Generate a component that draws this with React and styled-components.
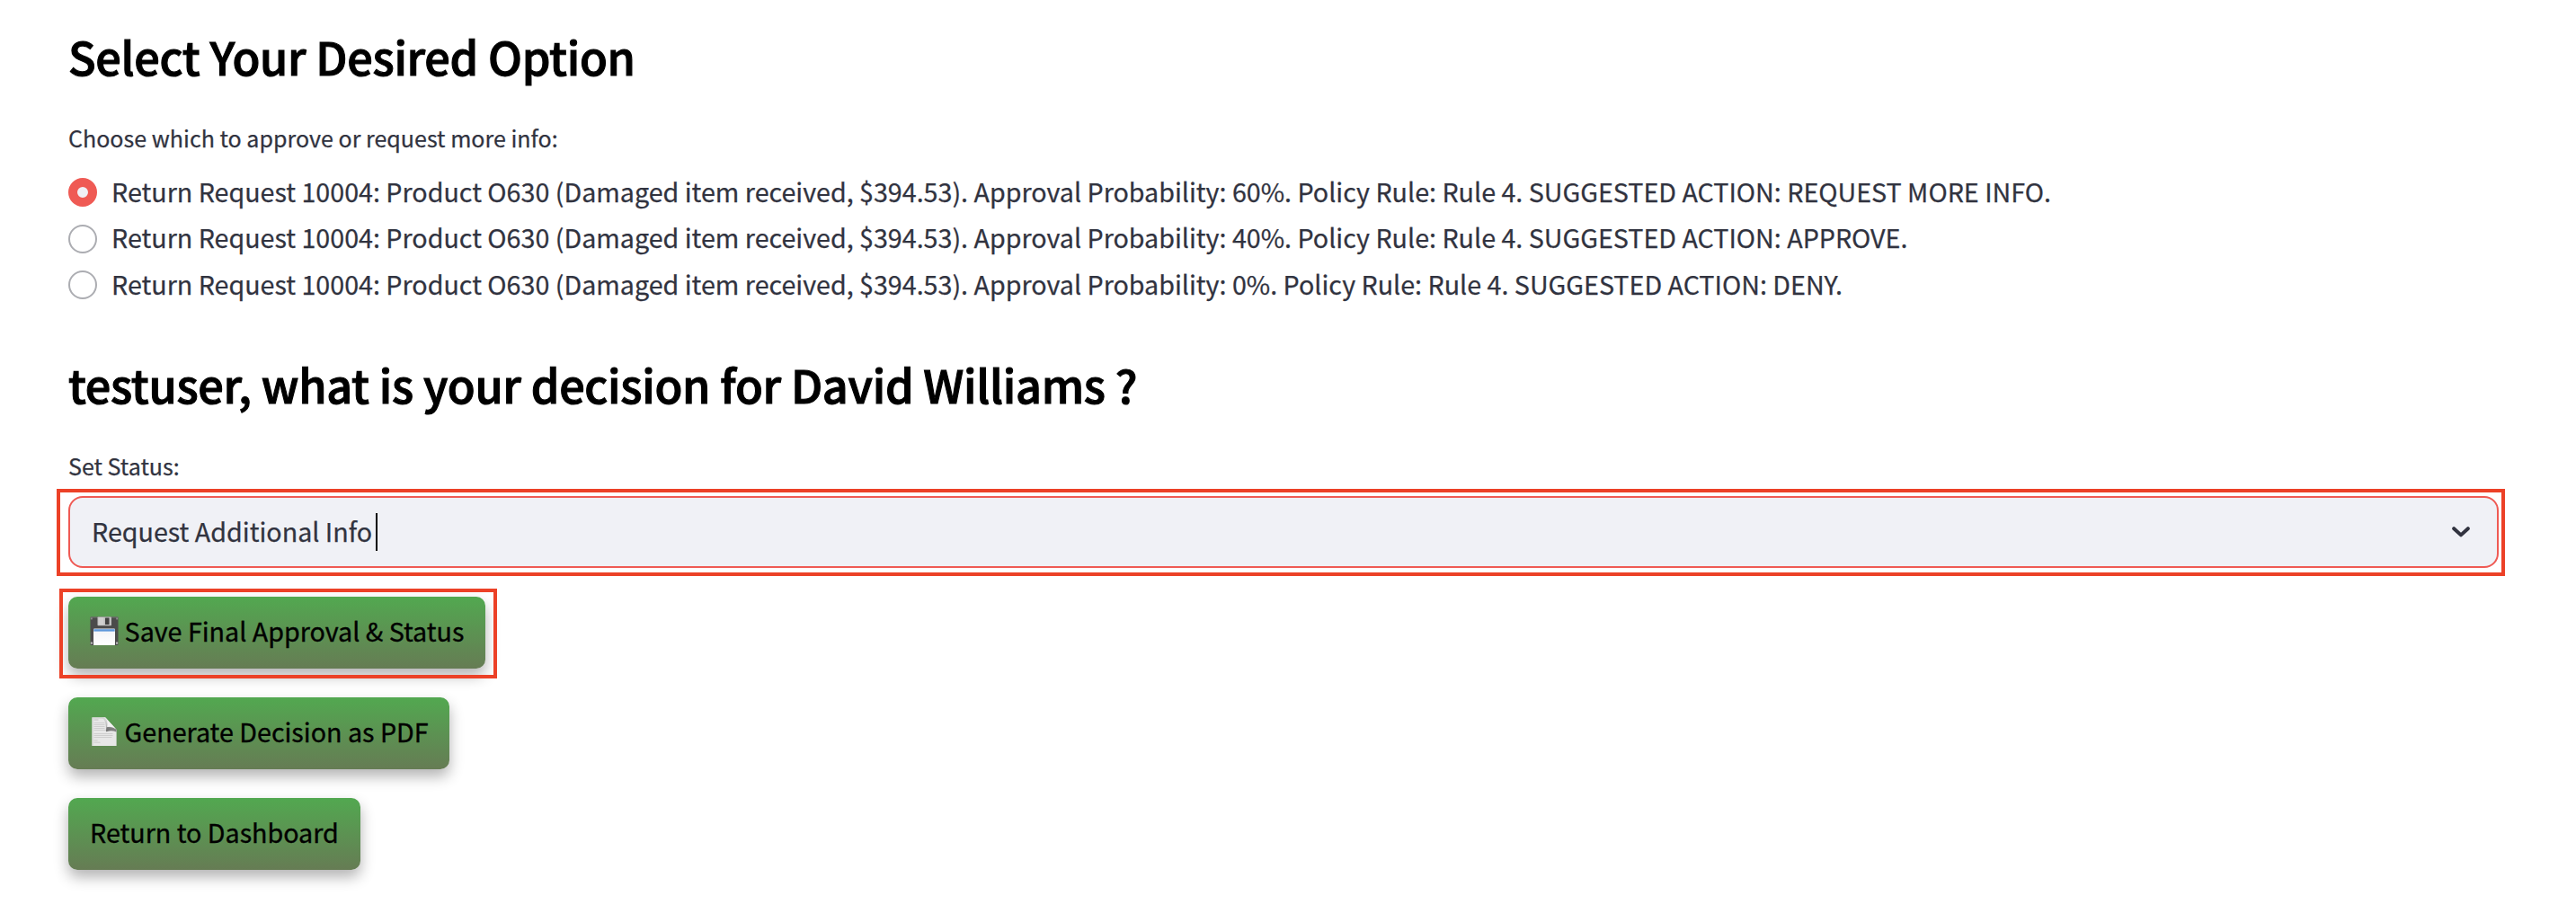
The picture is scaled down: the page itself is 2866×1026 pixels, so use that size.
import React from "react";
import styled, { createGlobalStyle } from "styled-components";

const ink = "#31333f";
const accent = "#ef5a54";
const highlight = "#ec4127";

const GlobalStyle = createGlobalStyle`
  *, *::before, *::after { box-sizing: border-box; }
  body {
    margin: 0;
    background: #fff;
    color: ${ink};
    font-family: "Noto Sans CJK SC", "Open Sans", sans-serif;
    font-size: 28.66px;
    -webkit-text-stroke: 0.25px currentColor;
  }
`;

const Page = styled.main`
  display: flex;
  flex-direction: column;
  align-items: stretch;
  padding: 32px 86px 58px 76px;
  white-space: nowrap;
`;

const Heading = styled.h2`
  margin: 0;
  height: 61px;
  line-height: 61px;
  font-size: 50.4px;
  font-weight: 500;
  letter-spacing: -0.3px;
  -webkit-text-stroke: 1.1px #000;
  color: #000;
`;

const FieldLabel = styled.label`
  display: block;
  height: 40px;
  margin-top: ${(p) => p.$gap}px;
  line-height: 40px;
  font-size: 25.06px;
`;

const RadioGroup = styled.div`
  display: flex;
  flex-direction: column;
  margin: 13.5px 0 56px;
`;

const RadioRow = styled.div`
  display: flex;
  align-items: flex-start;
  gap: 16px;
  height: 51.5px;
  line-height: 51.5px;
`;

const RadioMark = styled.span`
  flex: none;
  width: 32px;
  height: 32px;
  margin-top: 11.5px;
  border-radius: 50%;
  border: ${(p) => (p.$checked ? `10px solid ${accent}` : "2px solid #acadb2")};
  background: ${(p) => (p.$checked ? "#f0f1f6" : "#fff")};
`;

const Select = styled.div`
  position: relative;
  display: flex;
  align-items: center;
  height: 80px;
  margin-top: 14px;
  padding: 0 30px 0 24px;
  border: 2px solid ${accent};
  border-radius: 16px;
  background: #f0f1f6;

  &::after {
    content: "";
    position: absolute;
    inset: -10px -9px -11px -15px;
    border: 4px solid ${highlight};
  }
`;

const SelectValue = styled.span`
  line-height: 42px;
  padding-bottom: 3px;
`;

const Caret = styled.span`
  width: 2px;
  height: 42px;
  margin-left: 4px;
  background: #000;
`;

const Chevron = styled.svg`
  width: 20px;
  height: 12px;
  margin-left: auto;
`;

const Actions = styled.div`
  display: flex;
  flex-direction: column;
  align-items: flex-start;
  gap: 32px;
  margin-top: 32px;
`;

const ActionButton = styled.button`
  position: relative;
  display: flex;
  align-items: center;
  width: ${(p) => p.$width}px;
  height: 80px;
  padding: 0 0 4px 24px;
  border: 0;
  border-radius: 10px;
  background: linear-gradient(#52a850, #667c54);
  box-shadow: 0 8px 16px rgba(0, 0, 0, 0.3);
  color: #000;
  font: inherit;
  line-height: 42px;
  -webkit-text-stroke: 0.35px #000;

  ${(p) =>
    p.$highlighted &&
    `&::after {
      content: "";
      position: absolute;
      inset: -9px -13px -11px -10px;
      border: 4px solid ${highlight};
    }`}
`;

const Emoji = styled.svg`
  flex: none;
  width: 32px;
  height: 32px;
  margin-right: 6.6px;
`;

const FloppyIcon = () => (
  <Emoji viewBox="0 0 32 32" aria-hidden="true">
    <defs>
      <linearGradient id="sheet" x2="0" y2="1">
        <stop offset="0" stopColor="#f1f2f6" />
        <stop offset="1" stopColor="#fff" />
      </linearGradient>
    </defs>
    <rect x="0.5" y="0.5" width="31" height="31.5" rx="1" fill="#4b4b4b" />
    <rect x="0.5" y="0.5" width="31" height="1" fill="#777" />
    <rect x="0.8" y="1.4" width="2" height="2" fill="#8c8c8c" />
    <rect x="29.2" y="1.4" width="2" height="2" fill="#8c8c8c" />
    <rect x="8.5" y="0.5" width="15.5" height="9.8" rx="0.8" fill="#bfbfbf" />
    <rect x="9.5" y="1" width="6" height="8.5" fill="#d0d0d0" />
    <rect x="17" y="1.5" width="4.5" height="7.5" rx="0.5" fill="#424242" />
    <path d="M4 32V14.5q0-1 1-1h22q1 0 1 1V32z" fill="url(#sheet)" />
    <rect x="4.3" y="14.2" width="23.4" height="2.4" fill="#5d97db" />
    <rect x="0.8" y="28.5" width="2.2" height="2.2" fill="#b9b9b9" />
    <rect x="29" y="28.5" width="2.2" height="2.2" fill="#b9b9b9" />
  </Emoji>
);

const PageIcon = () => (
  <Emoji viewBox="0 0 32 32" aria-hidden="true">
    <defs>
      <linearGradient id="fold" x1="0" y1="1" x2="0.7" y2="0.3">
        <stop offset="0" stopColor="#555" />
        <stop offset="0.5" stopColor="#b5b5b5" />
        <stop offset="1" stopColor="#f4f4f4" />
      </linearGradient>
    </defs>
    <path d="M2.3 0.3H17L29.6 14V32H2.3z" fill="#e7e7e7" />
    <path d="M3.2 31.5V1.2H15" fill="none" stroke="#d0d0d0" strokeWidth="0.8" />
    <path d="M4.5 3h5" stroke="#c4c4c4" strokeWidth="1" />
    <path
      d="M4.5 6.5h12M4.5 8.5h12M4.5 10.5h12M4.5 12.5h12M4.5 14.5h14M4.5 18.5h21M4.5 20.5h21M4.5 22.5h20"
      stroke="#cbcbcb"
      strokeWidth="0.9"
    />
    <path d="M4.5 26h4M4.5 28.2h7" stroke="#c9c9c9" strokeWidth="0.9" />
    <path d="M13.5 0.8Q18.5 3 18 16Q25 14 29.5 16.5V14L17 0.3z" fill="url(#fold)" />
    <path d="M18 16.2Q24 14 29.6 16.5V13.5Q24 10.5 18.8 11.2z" fill="#686868" opacity="0.75" />
    <path d="M17 0.3Q20.5 5 19.2 11Q25.5 9.8 29.6 14z" fill="#f2f2f2" />
  </Emoji>
);

const options = [
  { probability: "60%", action: "REQUEST MORE INFO", checked: true },
  { probability: "40%", action: "APPROVE" },
  { probability: "0%", action: "DENY" },
];

export default function App() {
  return (
    <>
      <GlobalStyle />
      <Page>
        <Heading>Select Your Desired Option</Heading>
        <FieldLabel $gap={40}>Choose which to approve or request more info:</FieldLabel>
        <RadioGroup role="radiogroup">
          {options.map(({ probability, action, checked }) => (
            <RadioRow key={action} role="radio" aria-checked={!!checked}>
              <RadioMark $checked={checked} />
              <span>
                {`Return Request 10004: Product O630 (Damaged item received, $394.53). Approval Probability: ${probability}. Policy Rule: Rule 4. SUGGESTED ACTION: ${action}.`}
              </span>
            </RadioRow>
          ))}
        </RadioGroup>
        <Heading>testuser, what is your decision for David Williams ?</Heading>
        <FieldLabel $gap={40}>Set Status:</FieldLabel>
        <Select role="combobox">
          <SelectValue>Request Additional Info</SelectValue>
          <Caret />
          <Chevron viewBox="0 0 20 12" aria-hidden="true">
            <path
              d="M2.2 2.2L10 9.4L17.8 2.2"
              fill="none"
              stroke={ink}
              strokeWidth="4"
              strokeLinecap="round"
              strokeLinejoin="round"
            />
          </Chevron>
        </Select>
        <Actions>
          <ActionButton $width={464} $highlighted>
            <FloppyIcon />
            <span>Save Final Approval &amp; Status</span>
          </ActionButton>
          <ActionButton $width={424}>
            <PageIcon />
            <span>Generate Decision as PDF</span>
          </ActionButton>
          <ActionButton $width={325}>Return to Dashboard</ActionButton>
        </Actions>
      </Page>
    </>
  );
}
